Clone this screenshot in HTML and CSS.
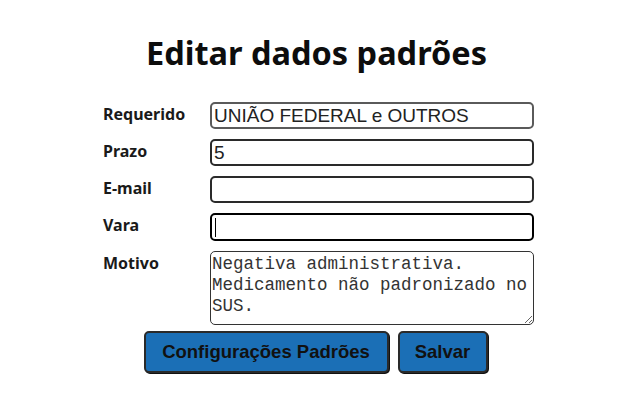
FILE: index.html
```html
<!DOCTYPE html>
<html lang="pt">
<head>
<meta charset="utf-8">
<link rel="stylesheet" href="styles.css">
</head>
<body>
<div class="panel">
  <h1 class="title">Editar dados padrões</h1>
  <form class="form">
    <label class="label">Requerido</label>
    <input class="field field-soft" type="text" value="UNIÃO FEDERAL e OUTROS">
    <label class="label">Prazo</label>
    <input class="field field-mid" type="text" value="5">
    <label class="label">E-mail</label>
    <input class="field field-mid" type="text" value="">
    <label class="label">Vara</label>
    <div class="field field-focus"><span class="caret"></span></div>
    <label class="label">Motivo</label>
    <textarea class="area">Negativa administrativa. Medicamento não padronizado no SUS.</textarea>
  </form>
  <div class="actions">
    <button class="btn btn-wide" type="button">Configurações Padrões</button>
    <button class="btn" type="button">Salvar</button>
  </div>
</div>
</body>
</html>
```
FILE: styles.css
```css
html, body {
  margin: 0;
  padding: 0;
  background: #ffffff;
}
body {
  width: 640px;
  height: 400px;
  overflow: hidden;
}
.panel {
  width: 477px;
  margin-left: 78px;
  padding-top: 30px;
  font-family: "Noto Sans", "Open Sans", sans-serif;
  color: #111;
}
.title {
  margin: 0 0 27px 0;
  text-align: center;
  font-size: 32.5px;
  line-height: 45px;
  font-weight: 700;
  color: #0d0d0d;
}
.form {
  display: grid;
  grid-template-columns: 107px 324px;
  column-gap: 0;
  row-gap: 10px;
  padding-left: 25px;
}
.label {
  font-size: 16px;
  font-weight: 700;
  line-height: 22px;
  padding-top: 1px;
  color: #1a1a1a;
}
.field {
  box-sizing: border-box;
  width: 324px;
  height: 27px;
  margin: 0;
  padding: 0 2px;
  border: 2px solid #333;
  border-radius: 5px;
  font-family: "Liberation Sans", Arial, sans-serif;
  font-size: 19px;
  color: #222;
  background: #fff;
  outline: none;
}
.field-soft { border-color: #5a5a5a; }
.field-mid { border-color: #2a2a2a; }
.field-focus {
  height: 28px;
  border-color: #000;
  display: flex;
  align-items: center;
}
.caret {
  display: block;
  width: 1px;
  height: 19px;
  margin-left: 1px;
  background: #000;
}
.area {
  box-sizing: border-box;
  width: 324px;
  height: 74px;
  margin: 0;
  padding: 2px 1px;
  border: 1.5px solid #333;
  border-radius: 5px;
  font-family: "Liberation Mono", "DejaVu Sans Mono", monospace;
  font-size: 17.5px;
  line-height: 21px;
  color: #333;
  resize: vertical;
  overflow: hidden;
}
.actions {
  display: flex;
  justify-content: center;
  gap: 9px;
  margin-top: 6px;
  padding-right: 2px;
}
.btn {
  box-sizing: border-box;
  height: 42px;
  width: 90px;
  padding: 0;
  border: 2px solid #2a2a2a;
  border-radius: 5px;
  background: #1b6fb6;
  box-shadow: 1px 1px 0 #111;
  font-family: "Liberation Sans", Arial, sans-serif;
  font-size: 18.5px;
  font-weight: 700;
  color: #111;
}
.btn-wide { width: 245px; }
```
